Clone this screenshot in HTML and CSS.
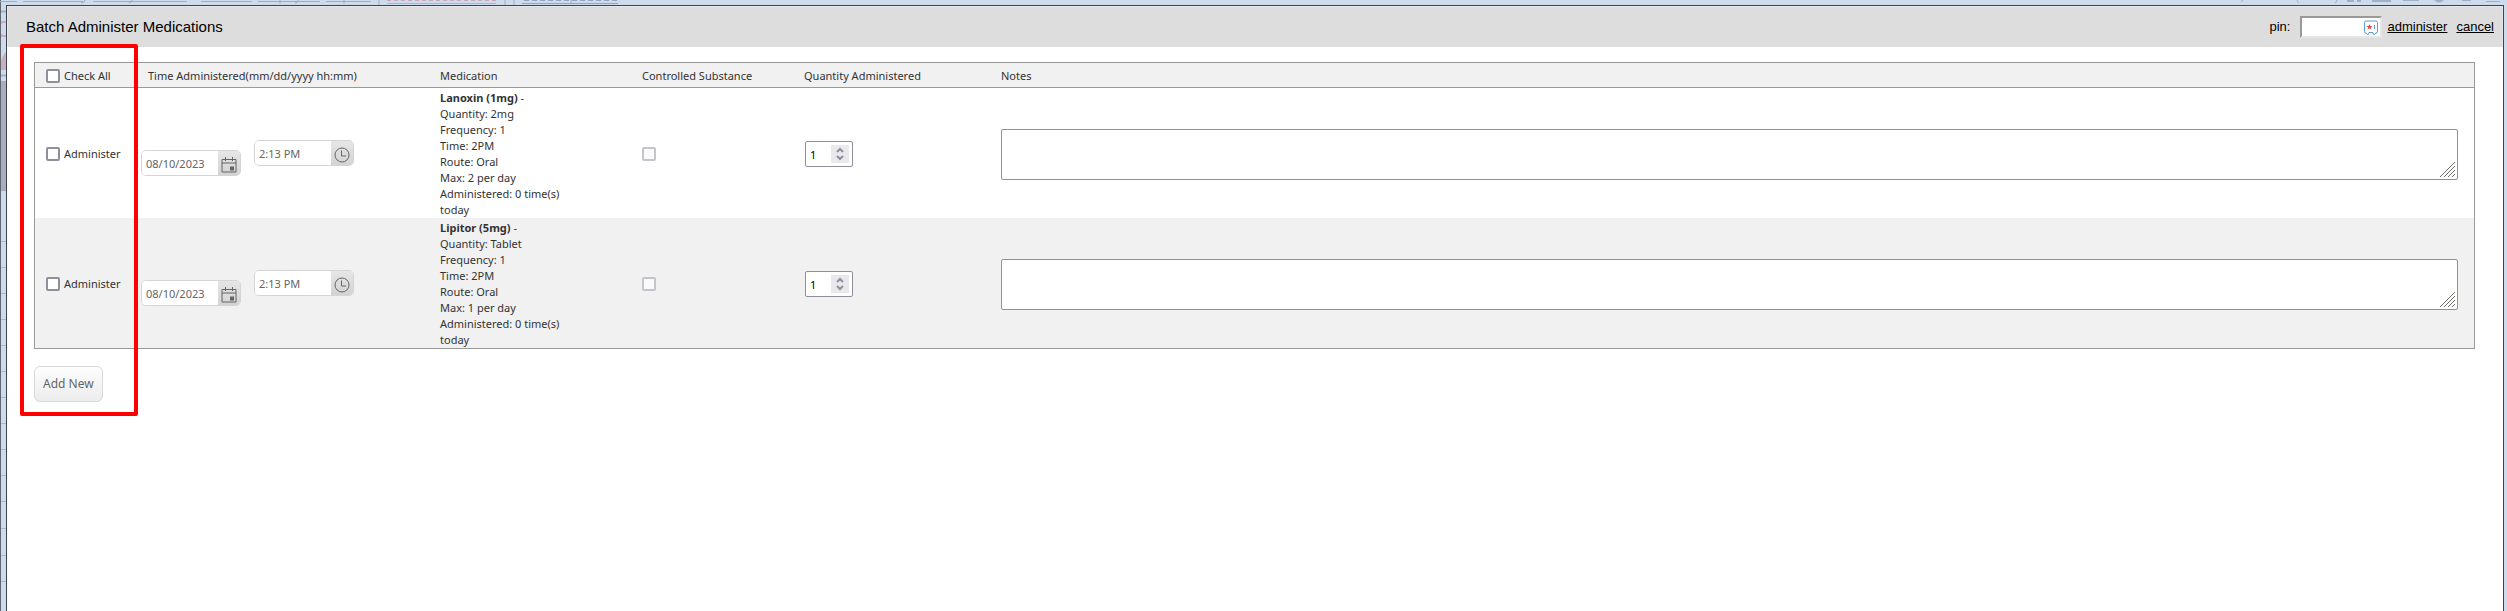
FILE: index.html
```
<!DOCTYPE html>
<html lang="en">
<head>
  <meta charset="UTF-8" />
  <meta name="viewport" content="width=device-width, initial-scale=1.0" />
  <title>Batch Administer Medications</title>
  <link rel="stylesheet" href="styles.css">
</head>
<body>
  <!-- dimmed page behind the dialog -->
  <svg class="backdrop backdrop-left" width="8" height="611" aria-hidden="true">
    <rect x="0" y="81" width="8" height="110" fill="#a9aebf" />
    <path d="M8 23a7 7 0 1 0 0 12" fill="none" stroke="#c9a9b4" stroke-width="2" />
    <path d="M8 50Q0 56 0 70H8z" fill="#c6b0bf" />
    <path d="M0 11.500H8M0 75.500H8" stroke="#9fb0c5" stroke-width="2" />
    <path d="M0 241.500H8M0 267.500H8M0 293.500H8M0 319.500H8M0 345.500H8M0 371.500H8M0 397.500H8M0 423.500H8M0 449.500H8M0 475.500H8M0 501.500H8M0 528.500H8M0 555.500H8M0 581.500H8" stroke="#a9b8ca" />
    <rect x="0" y="0" width="1" height="611" fill="#62666e" />
  </svg>
  <svg class="backdrop backdrop-top" width="620" height="5" aria-hidden="true">
    <path d="M0 1.500H17M23 1.500H83M93 1.500H187M201 1.500H252M258 1.500H320M326 1.500H371" stroke="#9fb0c5" />
    <path d="M85 0q0 3-4 3M132 0q0 3-3 3M280 0v4M298 0q0 3-3 3M344 0v4M379 0v5M505 0v5M514 0v5M571 0v4" fill="none" stroke="#9fb0c5" />
    <path d="M387 3.500H496" stroke="#cfa9bb" />
    <path d="M387 .5H496" stroke="#cfa9bb" stroke-dasharray="4 3" />
    <path d="M522 3.500H618" stroke="#94a5bd" />
    <path d="M524 .5H617" stroke="#94a5bd" stroke-dasharray="5 3" />
  </svg>
  <svg class="backdrop backdrop-right" width="270" height="5" aria-hidden="true">
    <path d="M6 0l-2 2M60 0q0 2 2 3M100 0q0 2-2 3" fill="none" stroke="#9fb0c5" />
    <path d="M110 0h7v2h-7zM120 0h4v2h-4zM135 0h19v2h-19zM166 0h16v1h-16zM197 0h10q-5 5-10 0zM225 0h9v1h-9zM249 1h14v1h-14z" fill="#9fb0c5" />
  </svg>

  <main class="dialog">
    <header class="dialog-header">
      <h1>Batch Administer Medications</h1>
      <form class="pin-form">
        <label for="pin">pin:</label>
        <span class="pin-box">
          <input type="password" id="pin">
          <svg width="14" height="15" viewBox="0 0 14 15" aria-hidden="true">
            <path d="M2 1h10q1.500 0 1.500 1.500v9q0 1.500-1.500 1.500l-1 1.300H9.500L9 12.500H5l-.5 1.800H3L2 13Q.5 13 .5 11.500v-9Q.5 1 2 1z" fill="#fff" stroke="#5b9bd0" />
            <path d="M5.500 4l.8 2 2.200.1-1.700 1.300.6 2.100-1.900-1.200-1.900 1.200.6-2.100L2.500 6.100l2.200-.1z" fill="#e5484d" />
            <path d="M10.500 5v4" stroke="#5b9bd0" />
          </svg>
        </span>
        <a href="#">administer</a>
        <a href="#">cancel</a>
      </form>
    </header>

    <div class="dialog-body">
      <table class="med-table">
        <colgroup>
          <col class="col-check">
          <col class="col-time">
          <col class="col-medication">
          <col class="col-controlled">
          <col class="col-quantity">
          <col>
        </colgroup>
        <thead>
          <tr>
            <th><label class="check"><input type="checkbox" id="checkAll">Check All</label></th>
            <th>Time Administered(mm/dd/yyyy hh:mm)</th>
            <th>Medication</th>
            <th>Controlled Substance</th>
            <th>Quantity Administered</th>
            <th>Notes</th>
          </tr>
        </thead>
        <tbody>
          <tr>
            <td><label class="check"><input type="checkbox" class="administer">Administer</label></td>
            <td class="time-cell">
              <div class="pickers">
                <div class="picker picker-date">
                  <input type="text" value="08/10/2023" aria-label="Date">
                  <button type="button" aria-label="Open calendar">
                    <svg width="16" height="16" viewBox="0 0 16 16"><path d="M1 2.500h14v12.500H1zM1 6h14M4.500 0v4M11.500 0v4" /><path class="solid" d="M9 9.500h4v4H9z" /></svg>
                  </button>
                </div>
                <div class="picker">
                  <input type="text" value="2:13 PM" aria-label="Time">
                  <button type="button" aria-label="Open time list">
                    <svg width="16" height="16" viewBox="0 0 16 16"><circle cx="8" cy="8" r="7" /><path d="M7.500 3.500V9H12" /></svg>
                  </button>
                </div>
              </div>
            </td>
            <td>
              <div class="med-info">
                <b>Lanoxin (1mg)</b> -<br>
                Quantity: 2mg<br>
                Frequency: 1<br>
                Time: 2PM<br>
                Route: Oral<br>
                Max: 2 per day<br>
                Administered: 0 time(s) today
              </div>
            </td>
            <td><input type="checkbox" disabled aria-label="Controlled substance"></td>
            <td>
              <div class="quantity">
                <input type="number" value="1" aria-label="Quantity administered">
                <svg width="18" height="18" viewBox="0 0 18 18" aria-hidden="true"><path d="M6 7l3-3 3 3M6 11l3 3 3-3" /></svg>
              </div>
            </td>
            <td class="notes-cell">
              <div class="notes">
                <textarea aria-label="Notes"></textarea>
                <svg width="15" height="15" viewBox="0 0 15 15" aria-hidden="true"><path d="M0 15L15 0M4 15L15 4M8 15L15 8M12 15L15 12" /></svg>
              </div>
            </td>
          </tr>
          <tr>
            <td><label class="check"><input type="checkbox" class="administer">Administer</label></td>
            <td class="time-cell">
              <div class="pickers">
                <div class="picker picker-date">
                  <input type="text" value="08/10/2023" aria-label="Date">
                  <button type="button" aria-label="Open calendar">
                    <svg width="16" height="16" viewBox="0 0 16 16"><path d="M1 2.500h14v12.500H1zM1 6h14M4.500 0v4M11.500 0v4" /><path class="solid" d="M9 9.500h4v4H9z" /></svg>
                  </button>
                </div>
                <div class="picker">
                  <input type="text" value="2:13 PM" aria-label="Time">
                  <button type="button" aria-label="Open time list">
                    <svg width="16" height="16" viewBox="0 0 16 16"><circle cx="8" cy="8" r="7" /><path d="M7.500 3.500V9H12" /></svg>
                  </button>
                </div>
              </div>
            </td>
            <td>
              <div class="med-info">
                <b>Lipitor (5mg)</b> -<br>
                Quantity: Tablet<br>
                Frequency: 1<br>
                Time: 2PM<br>
                Route: Oral<br>
                Max: 1 per day<br>
                Administered: 0 time(s) today
              </div>
            </td>
            <td><input type="checkbox" disabled aria-label="Controlled substance"></td>
            <td>
              <div class="quantity">
                <input type="number" value="1" aria-label="Quantity administered">
                <svg width="18" height="18" viewBox="0 0 18 18" aria-hidden="true"><path d="M6 7l3-3 3 3M6 11l3 3 3-3" /></svg>
              </div>
            </td>
            <td class="notes-cell">
              <div class="notes">
                <textarea aria-label="Notes"></textarea>
                <svg width="15" height="15" viewBox="0 0 15 15" aria-hidden="true"><path d="M0 15L15 0M4 15L15 4M8 15L15 8M12 15L15 12" /></svg>
              </div>
            </td>
          </tr>
        </tbody>
      </table>
      <button type="button" class="add-new">Add New</button>
    </div>
    <div class="highlight"></div>
  </main>

  <script>
    const checkAll = document.getElementById('checkAll');

    checkAll.addEventListener('change', () => {
      document.querySelectorAll('.administer').forEach(box => {
        box.checked = checkAll.checked;
      });
    });
  </script>
</body>
</html>
```
FILE: styles.css
```
* {
  margin: 0;
  padding: 0;
  box-sizing: border-box;
}

body {
  display: flex;
  height: 100vh;
  padding: 5px 3px 0 6px;
  overflow: hidden;
  background: #cddced;
  font-family: 'Noto Sans', sans-serif;
  font-size: 11px;
  line-height: 16px;
  color: #333;
}

.backdrop {
  position: absolute;
  top: 0;
}

.backdrop-left {
  left: 0;
}

.backdrop-top {
  left: 0;
}

.backdrop-right {
  right: 0;
}

.dialog {
  position: relative;
  flex: 1;
  background: #fff;
  border: 1px solid #3f424c;
  border-bottom: none;
}

.dialog-header {
  display: flex;
  justify-content: space-between;
  align-items: center;
  height: 41px;
  padding: 0 8px 0 18px;
  background: #ddd;
  border: 1px solid #e6e8ee;
  border-bottom: none;
  font-family: 'Liberation Sans', sans-serif;
  color: #000;
}

.dialog-header h1 {
  font-size: 15px;
  font-weight: normal;
}

.pin-form {
  display: flex;
  align-items: center;
  font-size: 13px;
}

.pin-box {
  position: relative;
  margin: 0 5px 0 10px;
}

.pin-box input {
  display: block;
  width: 82px;
  height: 22px;
  border: 2px solid;
  border-color: #999 #e6e6e6 #e6e6e6 #999;
  background: #fff;
}

.pin-box svg {
  position: absolute;
  top: 4px;
  right: 4px;
}

.pin-form a {
  color: #000;
}

.pin-form a + a {
  margin-left: 9px;
}

.dialog-body {
  padding: 15px 28px 0 27px;
}

.med-table {
  width: 100%;
  table-layout: fixed;
  border-collapse: separate;
  border-spacing: 0;
  border: 1px solid #999;
}

.col-check {
  width: 105px;
}

.col-time {
  width: 292px;
}

.col-medication {
  width: 202px;
}

.col-controlled {
  width: 162px;
}

.col-quantity {
  width: 197px;
}

.med-table th {
  height: 25px;
  padding: 2px 8px 0;
  background: #f1f1f1;
  border-bottom: 1px solid #999;
  font-weight: normal;
  text-align: left;
}

.med-table td {
  padding: 2px 8px 0;
  vertical-align: middle;
}

.med-table tbody tr:nth-child(even) {
  background: #f1f1f1;
}

.med-table td.time-cell {
  padding: 10px 0 0 1px;
}

.med-table td.notes-cell {
  padding-right: 16px;
}

.check {
  display: flex;
  align-items: center;
  gap: 4px;
  padding-left: 3px;
}

input[type="checkbox"] {
  appearance: none;
  display: block;
  width: 14px;
  height: 14px;
  border: 2px solid #8f8f9d;
  border-radius: 2px;
  background: #fff;
}

input[type="checkbox"]:checked {
  background: #0060df;
}

input[type="checkbox"]:disabled {
  border-color: #c5c4cc;
  background: #fafafa;
}

.pickers {
  display: flex;
  align-items: flex-start;
  gap: 13px;
}

.picker {
  display: flex;
  width: 100px;
  height: 26px;
  border: 1px solid #d5d5d5;
  border-radius: 5px;
  background: #fff;
  overflow: hidden;
}

.picker-date {
  margin-top: 10px;
}

.picker input {
  flex: 1;
  min-width: 0;
  padding: 1px 0 0 4px;
  border: none;
  background: #fff;
  font: inherit;
  color: #656565;
}

.picker button {
  display: flex;
  align-items: center;
  justify-content: center;
  width: 22px;
  padding-top: 3px;
  border: none;
  background: linear-gradient(#e6e6e6, #d3d3d3);
}

.picker svg {
  fill: none;
  stroke: #656565;
}

.picker .solid {
  fill: #656565;
  stroke: none;
}

.med-info {
  max-width: 140px;
}

.quantity {
  position: relative;
  width: 48px;
  margin-left: 1px;
}

.quantity input {
  appearance: textfield;
  display: block;
  width: 48px;
  height: 26px;
  padding: 1px 0 0 4px;
  border: 1px solid #8f8f9d;
  border-radius: 2px;
  background: #fff;
  font: inherit;
  color: #000;
}

.quantity input::-webkit-inner-spin-button {
  display: none;
}

.quantity svg {
  position: absolute;
  top: 4px;
  right: 4px;
  background: #e9e9ed;
  fill: none;
  stroke: #8f8f9d;
  stroke-width: 2;
}

.notes {
  position: relative;
}

.notes textarea {
  display: block;
  width: 100%;
  height: 51px;
  padding: 2px 4px;
  border: 1px solid #8f8f9d;
  border-radius: 2px;
  background: #fff;
  font: inherit;
  resize: none;
}

.notes svg {
  position: absolute;
  right: 3px;
  bottom: 3px;
  pointer-events: none;
  stroke: #6f6f6a;
}

.add-new {
  display: block;
  min-width: 68px;
  height: 36px;
  margin-top: 17px;
  padding: 0 8px;
  border: 1px solid #d9d9d9;
  border-radius: 6px;
  background: linear-gradient(#fdfdfd, #ececec);
  font: inherit;
  font-size: 12px;
  color: #656565;
}

/* red frame around the check column */
.highlight {
  position: absolute;
  top: 38px;
  left: 13px;
  width: 118px;
  height: 372px;
  border: 4px solid #f00;
  border-radius: 2px;
  pointer-events: none;
}
```
